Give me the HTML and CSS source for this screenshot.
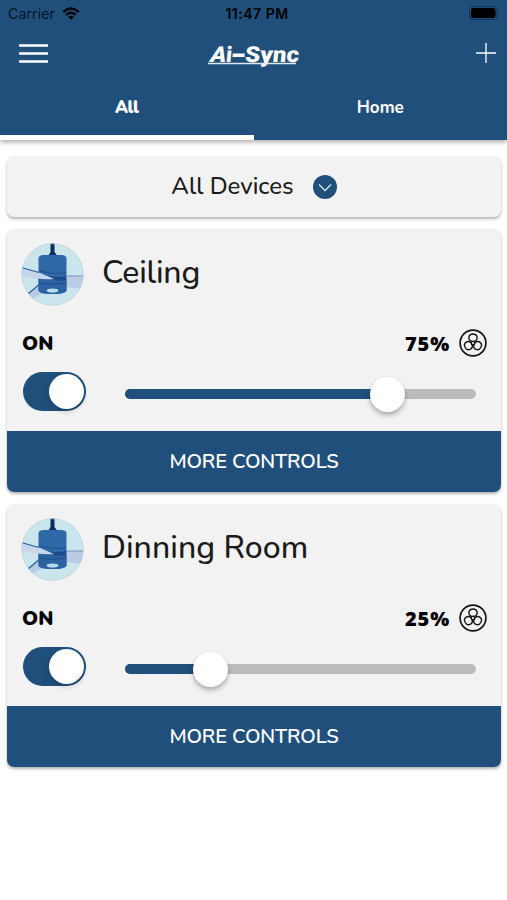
FILE: index.html
```html
<!DOCTYPE html>
<html lang="en">
<head>
<meta charset="utf-8">
<title>Ai-Sync</title>
<link rel="stylesheet" href="styles.css">
</head>
<body>
<svg class="defs" aria-hidden="true">
  <symbol id="ceiling-fan" viewBox="0 0 63 63">
    <clipPath id="disc"><circle cx="31.500" cy="31.500" r="31"/></clipPath>
    <g clip-path="url(#disc)">
      <rect width="63" height="63" fill="#cae5ec"/>
      <path d="M63 33H44v11l19 2Z" fill="#bccbe5"/>
      <path d="M44 33h19" stroke="#7294bd" stroke-width="1"/>
      <path d="M22 39 7 51l4 5 17-9Z" fill="#b9cce5"/>
      <path d="M20 40 7 51" stroke="#2b5a95" stroke-width="1.200"/>
      <path d="M29.500 0h4v9l3 4H27l2.500-4Z" fill="#0b2d5c"/>
      <path d="M17.500 15q0-2 4-3h20q4 1 4 3v32q0 4-14 4t-14-4Z" fill="#3069a8"/>
      <path d="M17.500 34q13 6 28 2v12q-2 3-14 3t-14-3Z" fill="#2c62a1"/>
      <path d="M18 28q14 4 27 2M18 40q13 3 27 0" fill="none" stroke="#1a4a84" stroke-width=".8"/>
      <path d="M27 33q10 2 18 0v4q-8 2-14-1Z" fill="#1b4c88"/>
      <ellipse cx="31.500" cy="47.500" rx="6" ry="2" fill="#b7dced"/>
      <path d="M0 24.500 18 29.500 33 36q-17 1-33-4Z" fill="#c7d5eb"/>
      <path d="M0 24.500 18 29.500" stroke="#295b96" stroke-width="1.200"/>
    </g>
    <circle cx="31.500" cy="31.500" r="30.700" fill="none" stroke="#b8cfd5" stroke-width=".6"/>
  </symbol>
  <symbol id="fan-speed" viewBox="0 0 28 28">
    <g fill="none" stroke="#151515" stroke-width="1.700">
      <circle cx="14" cy="14" r="12.900"/>
      <g stroke-width="1.400">
        <path d="M12.800 12.400C8.500 11 9 5 14 5s5.500 6 1.200 7.400"/>
        <path d="M12.800 12.400C8.500 11 9 5 14 5s5.500 6 1.200 7.400" transform="rotate(120 14 14)"/>
        <path d="M12.800 12.400C8.500 11 9 5 14 5s5.500 6 1.200 7.400" transform="rotate(240 14 14)"/>
        <circle cx="14" cy="14" r="1.800"/>
      </g>
    </g>
  </symbol>
</svg>
<header class="header">
  <div class="status">
    <div class="carrier"><span>Carrier</span>
      <svg width="18" height="13" viewBox="0 0 18 13"><g fill="none" stroke="#000" stroke-width="2.300"><path d="M1.300 4.800q7.700-6.500 15.400 0"/><path d="M4.100 7.800q4.900-4 9.800 0"/></g><path d="M6 9.800q3-2 6 0l-3 3Z"/></svg>
    </div>
    <span class="time">11:47 PM</span>
    <svg class="battery" width="32" height="14" viewBox="0 0 32 14"><rect x=".5" y=".5" width="27.500" height="13" rx="3.500" fill="none" stroke="#123453"/><rect x="2" y="2" width="24.500" height="10" rx="2"/><path d="M29.500 5q2 2 0 4Z" fill="#123453"/></svg>
  </div>
  <nav class="nav">
    <svg width="29" height="19" viewBox="0 0 29 19"><path d="M0 1.500h29M0 9.500h29M0 17.500h29" stroke="#fff" stroke-width="2.300"/></svg>
    <svg class="logo" width="94" height="28" viewBox="0 0 94 28"><g class="word"><text class="slant" x="3" y="19" textLength="16" lengthAdjust="spacingAndGlyphs">A</text><text x="18.500" y="19" textLength="6" lengthAdjust="spacingAndGlyphs">i</text><path d="M25 10.500h12v3.500H25Z"/><text x="37.500" y="19" textLength="54" lengthAdjust="spacingAndGlyphs">Sync</text></g><path d="M1 20.500h88" stroke="#dce8f2" stroke-width="1.300"/></svg>
    <svg width="20" height="20" viewBox="0 0 20 20"><path d="M0 10h20M10 0v20" stroke="#fff" stroke-width="1.300"/></svg>
  </nav>
  <div class="tabs">
    <div class="tab active">All</div>
    <div class="tab">Home</div>
  </div>
</header>
<main class="content">
  <section class="filter">
    <span>All Devices</span>
    <svg width="24" height="24" viewBox="0 0 24 24"><circle cx="12" cy="12" r="12" fill="#1f4f7a"/><path d="m6 9.500 6 6 6-6" fill="none" stroke="#d8e4ed" stroke-width="1.300"/></svg>
  </section>
  <section class="card">
    <div class="device"><svg width="63" height="63"><use href="#ceiling-fan"/></svg><h2>Ceiling</h2></div>
    <div class="state"><span class="on">ON</span><span class="percent">75%</span><svg width="28" height="28"><use href="#fan-speed"/></svg></div>
    <div class="controls"><div class="switch"><i class="knob"></i></div><div class="slider"><div class="fill" style="width:262px"></div><i class="knob"></i></div></div>
    <div class="more"><span>MORE CONTROLS</span></div>
  </section>
  <section class="card">
    <div class="device"><svg width="63" height="63"><use href="#ceiling-fan"/></svg><h2 class="wide">Dinning Room</h2></div>
    <div class="state"><span class="on">ON</span><span class="percent">25%</span><svg width="28" height="28"><use href="#fan-speed"/></svg></div>
    <div class="controls"><div class="switch"><i class="knob"></i></div><div class="slider"><div class="fill" style="width:85px"></div><i class="knob"></i></div></div>
    <div class="more"><span>MORE CONTROLS</span></div>
  </section>
</main>
</body>
</html>
```
FILE: styles.css
```css
* { box-sizing: border-box; }
body { margin: 0; min-height: 900px; background: #fff; color: #1b1b1b; font-family: Nunito, "Noto Sans", sans-serif; }
svg { display: block; flex: none; }
.defs { position: absolute; width: 0; height: 0; }
.header { height: 140px; background: #1f4f7a; box-shadow: 0 2px 5px rgba(0,0,0,.35); }
.status { height: 27px; padding: 0 6px 0 8px; display: grid; grid-template-columns: 1fr auto 1fr; align-items: center; color: #000; font: 14px/27px Inter, sans-serif; }
.carrier { display: flex; align-items: center; gap: 7px; letter-spacing: .15px; color: #061625; }
.carrier svg { margin-top: -1px; }
.time { font-weight: 600; letter-spacing: .5px; padding-left: 5px; }
.battery { justify-self: end; margin-top: -1px; }
.nav { height: 53px; padding: 0 11px 0 19px; display: grid; grid-template-columns: 1fr auto 1fr; align-items: center; }
.nav > :first-child, .nav > :last-child { margin-top: -1px; }
.nav > :last-child { justify-self: end; }
.logo { margin: 6px 7px 0 0; fill: #fff; }
.word { transform: skewX(-5deg); transform-origin: 0 19px; }
.logo text { font: 900 22px Roboto, sans-serif; }
.logo .slant { font-style: italic; }
.tabs { height: 60px; display: flex; }
.tab { flex: 1; text-align: center; color: #fff; font-size: 17px; line-height: 56px; font-weight: 700; border-bottom: 5px solid transparent; }
.active { border-color: #fff; font-weight: 900; letter-spacing: -.4px; }
.content { padding: 16px 6px 0 7px; }
.filter, .card { background: #f2f2f2; border-radius: 7px; box-shadow: 0 2px 3px rgba(0,0,0,.3); }
.filter { height: 61px; display: flex; justify-content: center; align-items: center; gap: 19px; font-size: 24px; font-weight: 500; }
.filter span { margin-top: -2px; }
.card { height: 263px; margin-top: 12px; overflow: hidden; }
.device { display: flex; align-items: center; gap: 18px; padding: 13px 14px 0; height: 77px; }
h2 { margin: -2px 0 0; font-size: 32px; line-height: 44px; font-weight: 500; letter-spacing: -.2px; }
.wide { letter-spacing: .05px; }
.state { height: 48px; margin-top: 13px; display: flex; align-items: center; padding: 0 14px 0 15px; color: #000; font-size: 20px; font-weight: 900; }
.percent { margin: 2px 9px 0 auto; font: 800 20px/28px "Open Sans", sans-serif; letter-spacing: .9px; }
.controls { height: 64px; display: flex; align-items: center; padding: 0 25px 14px 16px; }
.switch { width: 63px; height: 39px; margin-top: -1px; border-radius: 20px; background: #1f4f7a; display: flex; align-items: center; justify-content: flex-end; padding-right: 2px; }
.knob { display: block; flex: none; width: 35px; height: 35px; border-radius: 50%; background: #fff; box-shadow: 0 3px 5px rgba(0,0,0,.14); }
.slider { flex: 1; height: 10px; margin: 4px 0 0 39px; border-radius: 5px; background: #bcbcbc; display: flex; align-items: center; }
.fill { height: 10px; border-radius: 5px; background: #1f4f7a; }
.slider .knob { margin-left: -17px; box-shadow: 0 3px 5px rgba(0,0,0,.3); }
.more { height: 61px; display: flex; align-items: center; justify-content: center; background: #1f4f7a; color: #fff; font-size: 20px; font-weight: 600; letter-spacing: -.15px; }
```
